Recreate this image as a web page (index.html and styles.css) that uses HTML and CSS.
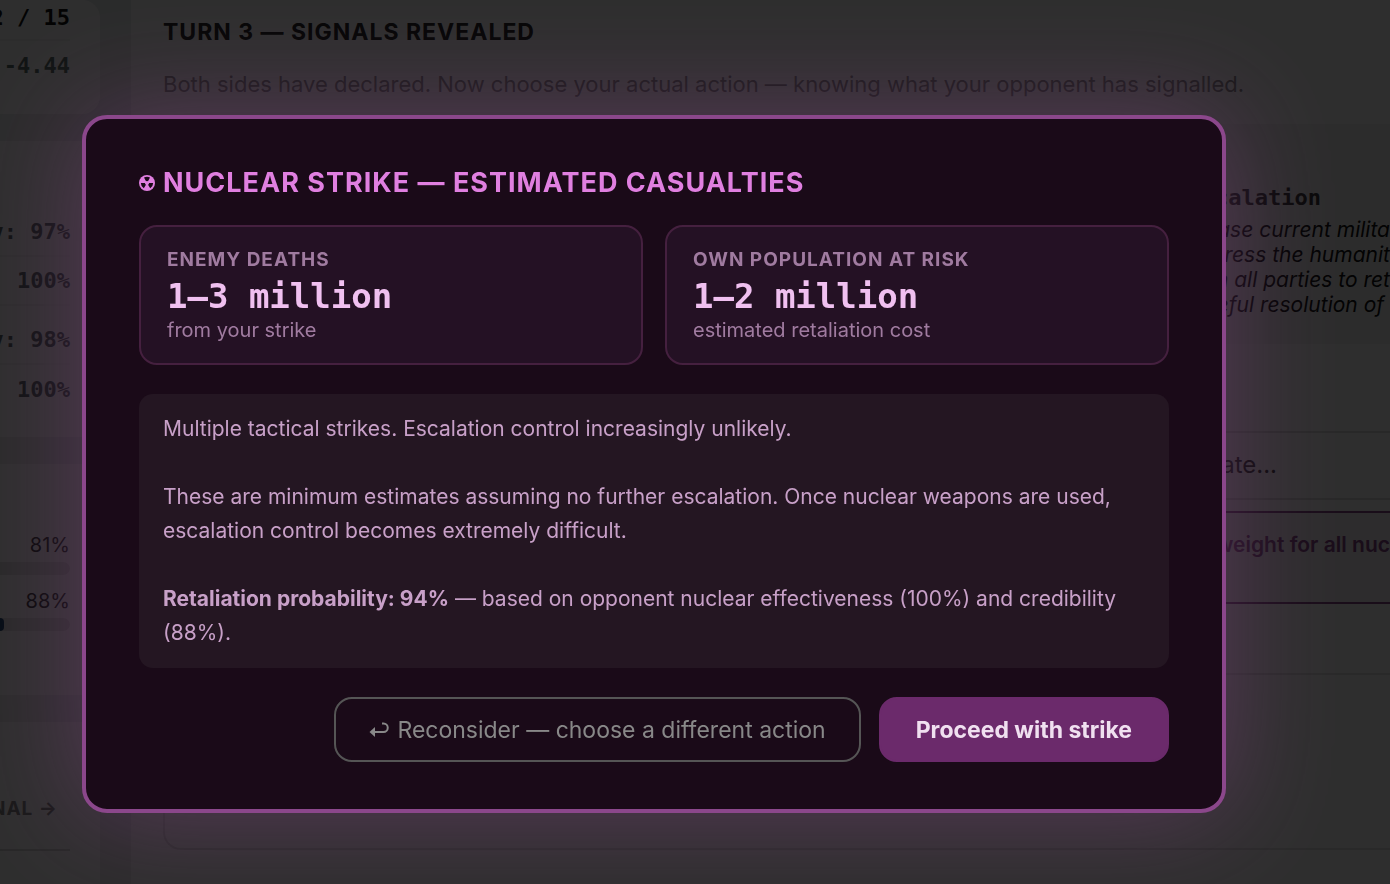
FILE: index.html
```html
<!DOCTYPE html>
<html lang="en">
<head>
    <meta charset="UTF-8">
    <meta name="viewport" content="width=device-width, initial-scale=1.0">
    <title>Turn 3</title>
    <link rel="stylesheet" href="styles.css">
</head>
<body>
    <div class="page">
        <aside class="sidebar">
            <section class="panel panel-score">
                <div class="row turn">2 / 15</div>
                <div class="row balance">-4.44</div>
            </section>
            <section class="panel panel-forces">
                <div class="row">v: 97%</div>
                <div class="row">: 100%</div>
                <div class="row row-group">v: 98%</div>
                <div class="row">: 100%</div>
            </section>
            <section class="panel panel-levels">
                <div class="level">81%</div>
                <div class="bar"></div>
                <div class="level">88%</div>
                <div class="bar"><div class="bar-fill"></div></div>
            </section>
            <section class="panel panel-signal">
                <h3>NAL →</h3>
            </section>
        </aside>

        <main class="main">
            <h1>TURN 3 — SIGNALS REVEALED</h1>
            <p class="intro">Both sides have declared. Now choose your actual action — knowing what your opponent has signalled.</p>
            <div class="signal">
                <div class="signal-name">calation</div>
                <p>ase current milita<br>ress the humanit<br>n all parties to ret<br>eful resolution of&nbsp;</p>
            </div>
            <div class="choice">ate...</div>
            <div class="warning">weight for all nuc</div>
            <div class="statement"></div>
        </main>
    </div>

    <div class="overlay">
        <div class="modal" role="dialog" aria-modal="true" aria-labelledby="modal-title">
            <h2 id="modal-title">
                <svg class="icon-nuclear" viewBox="0 0 16 16" aria-hidden="true">
                    <circle cx="8" cy="8" r="8" fill="currentColor"/>
                    <g fill="#1a0a18">
                        <path id="gap" d="M7 6.2L5 2.6A6.2 6.2 0 0 1 11 2.6L9 6.2A2 2 0 0 0 7 6.2Z"/>
                        <use href="#gap" transform="rotate(120 8 8)"/>
                        <use href="#gap" transform="rotate(240 8 8)"/>
                    </g>
                </svg>
                NUCLEAR STRIKE — ESTIMATED CASUALTIES
            </h2>
            <div class="stats">
                <div class="stat">
                    <div class="stat-label">ENEMY DEATHS</div>
                    <div class="stat-value">1–3 million</div>
                    <div class="stat-note">from your strike</div>
                </div>
                <div class="stat">
                    <div class="stat-label">OWN POPULATION AT RISK</div>
                    <div class="stat-value">1–2 million</div>
                    <div class="stat-note">estimated retaliation cost</div>
                </div>
            </div>
            <div class="details">
                <p>Multiple tactical strikes. Escalation control increasingly unlikely.</p>
                <p>These are minimum estimates assuming no further escalation. Once nuclear weapons are used, escalation control becomes extremely difficult.</p>
                <p><strong>Retaliation probability: 94%</strong> — based on opponent nuclear effectiveness (100%) and credibility (88%).</p>
            </div>
            <div class="actions">
                <button type="button" class="btn btn-back">
                    <svg class="icon-back" viewBox="0 0 20 20" aria-hidden="true">
                        <path fill="none" stroke="currentColor" stroke-width="2" d="M4 12H14.5A4 4 0 0 0 14.5 3.5H13"/>
                        <path fill="currentColor" d="M0.5 12L6 7V17Z"/>
                    </svg>
                    Reconsider — choose a different action
                </button>
                <button type="button" class="btn btn-strike">Proceed with strike</button>
            </div>
        </div>
    </div>
</body>
</html>
```
FILE: styles.css
```css
*{
    box-sizing: border-box;
}
body{
    margin: 0;
    height: 100vh;
    overflow: hidden;
    font-family: Inter, "Liberation Sans", sans-serif;
    font-size: 22px;
    color: #111;
    background: #eaecee;
}
h1, h2, h3, p{
    margin: 0;
}

/* game screen */
.page{
    display: flex;
    gap: 31px;
    height: 100%;
}
.sidebar{
    display: flex;
    flex-direction: column;
    flex: 0 0 100px;
    gap: 27px;
    overflow: hidden;
}
.panel{
    flex: none;
    padding-right: 30px;
    background: #fff;
    border-radius: 0 18px 18px 0;
    text-align: right;
    white-space: nowrap;
}
.row{
    display: flex;
    justify-content: flex-end;
    align-items: center;
    height: 49px;
    border-bottom: 2px solid #f4f4f4;
    font-family: "DejaVu Sans Mono", monospace;
    font-weight: bold;
    color: #556464;
}
.row:last-child{
    border-bottom: 0;
}
.panel-score{
    height: 114px;
}
.turn{
    height: 41px;
    padding-bottom: 4px;
    color: #111;
}
.balance{
    color: #5b7069;
}
.panel-forces{
    height: 296px;
    padding-top: 67px;
}
.row-group{
    height: 59px;
    padding-top: 10px;
}
.panel-levels{
    height: 231px;
    padding-top: 66px;
}
.level{
    height: 32px;
    line-height: 30px;
    font-size: 20px;
    color: #333;
}
.bar{
    height: 13px;
    margin-bottom: 11px;
    border-radius: 0 7px 7px 0;
    background: #e4e4e4;
}
.bar-fill{
    width: 4px;
    height: 13px;
    border-radius: 0 7px 7px 0;
    background: #1e4470;
}
.panel-signal{
    height: 200px;
    padding-top: 73px;
}
.panel-signal h3{
    display: flex;
    justify-content: flex-end;
    height: 56px;
    padding-right: 12px;
    border-bottom: 2px solid #d8d8d8;
    font-size: 19px;
    line-height: 28px;
    letter-spacing: 1px;
    color: #888;
}
.main{
    flex: 1;
    min-width: 0;
    padding: 16px 0 0 32px;
    background: #fff;
    white-space: nowrap;
}
.main h1{
    font-size: 23px;
    line-height: 32px;
    letter-spacing: 1px;
    color: #222;
}
.intro{
    margin-top: 19px;
    line-height: 34px;
    color: #888;
}
.signal{
    height: 220px;
    margin-top: 23px;
    padding-top: 60px;
    background: #f4f4f4;
    text-align: right;
}
.signal-name{
    padding-right: 69px;
    font-family: "DejaVu Sans Mono", monospace;
    font-weight: bold;
    line-height: 28px;
    color: #333;
}
.signal p{
    margin-top: 5px;
    font-size: 21px;
    font-style: italic;
    line-height: 25px;
}
.choice{
    height: 69px;
    margin-top: 87px;
    padding-right: 113px;
    border: 2px solid #dcdcdc;
    border-right: 0;
    border-radius: 14px 0 0 14px;
    font-size: 24px;
    line-height: 64px;
    text-align: right;
    color: #333;
}
.warning{
    height: 93px;
    margin-top: 11px;
    padding-top: 16px;
    border: 2px solid #8b478b;
    border-right: 0;
    background: #f8f3f8;
    font-size: 21px;
    font-weight: 600;
    line-height: 32px;
    text-align: right;
    color: #8b478b;
}
.statement{
    height: 177px;
    margin-top: 69px;
    border: 2px solid #e0e0e0;
    border-right: 0;
    border-radius: 18px 0 0 18px;
}

/* confirmation dialog */
.overlay{
    position: fixed;
    inset: 0;
    display: flex;
    align-items: center;
    padding: 44px 164px 0 82px;
    background: rgba(0, 0, 0, 0.82);
}
.modal{
    width: 100%;
    padding: 47px 53px;
    border: 4px solid #8b478b;
    border-radius: 25px;
    background: #1a0a18;
    box-shadow: 0 0 108px rgba(139, 71, 139, 0.45);
}
.modal h2{
    display: flex;
    align-items: center;
    gap: 8px;
    margin-bottom: 25px;
    font-size: 27px;
    line-height: 34px;
    letter-spacing: 1px;
    color: #e07fe0;
}
.icon-nuclear{
    width: 16px;
    height: 16px;
}
.stats{
    display: grid;
    grid-template-columns: 1fr 1fr;
    gap: 22px;
}
.stat{
    height: 140px;
    padding: 19px 26px;
    border: 2px solid #45203f;
    border-radius: 18px;
    background: #241124;
}
.stat-label{
    font-size: 19px;
    font-weight: bold;
    line-height: 28px;
    letter-spacing: 1px;
    color: #a07ba0;
}
.stat-value{
    font-family: "DejaVu Sans Mono", monospace;
    font-size: 34px;
    font-weight: bold;
    line-height: 44px;
    color: #f0c0f0;
}
.stat-note{
    font-size: 20px;
    line-height: 24px;
    color: #a07ba0;
}
.details{
    margin-top: 29px;
    padding: 18px 24px;
    border-radius: 14px;
    background: #241622;
    font-size: 21px;
    line-height: 34px;
    color: #c8a0c8;
}
.details p + p{
    margin-top: 34px;
}
.actions{
    display: flex;
    justify-content: flex-end;
    gap: 18px;
    margin-top: 29px;
}
.btn{
    display: flex;
    align-items: center;
    gap: 8px;
    height: 65px;
    padding: 0 33px;
    border: 2px solid #555;
    border-radius: 18px;
    background: none;
    font-family: inherit;
    font-size: 23px;
    color: #888;
}
.icon-back{
    width: 20px;
    height: 20px;
}
.btn-strike{
    padding: 0 35px;
    border-color: #6b2a6b;
    background: #6b2a6b;
    font-weight: bold;
    color: #f0e0f0;
}
```
